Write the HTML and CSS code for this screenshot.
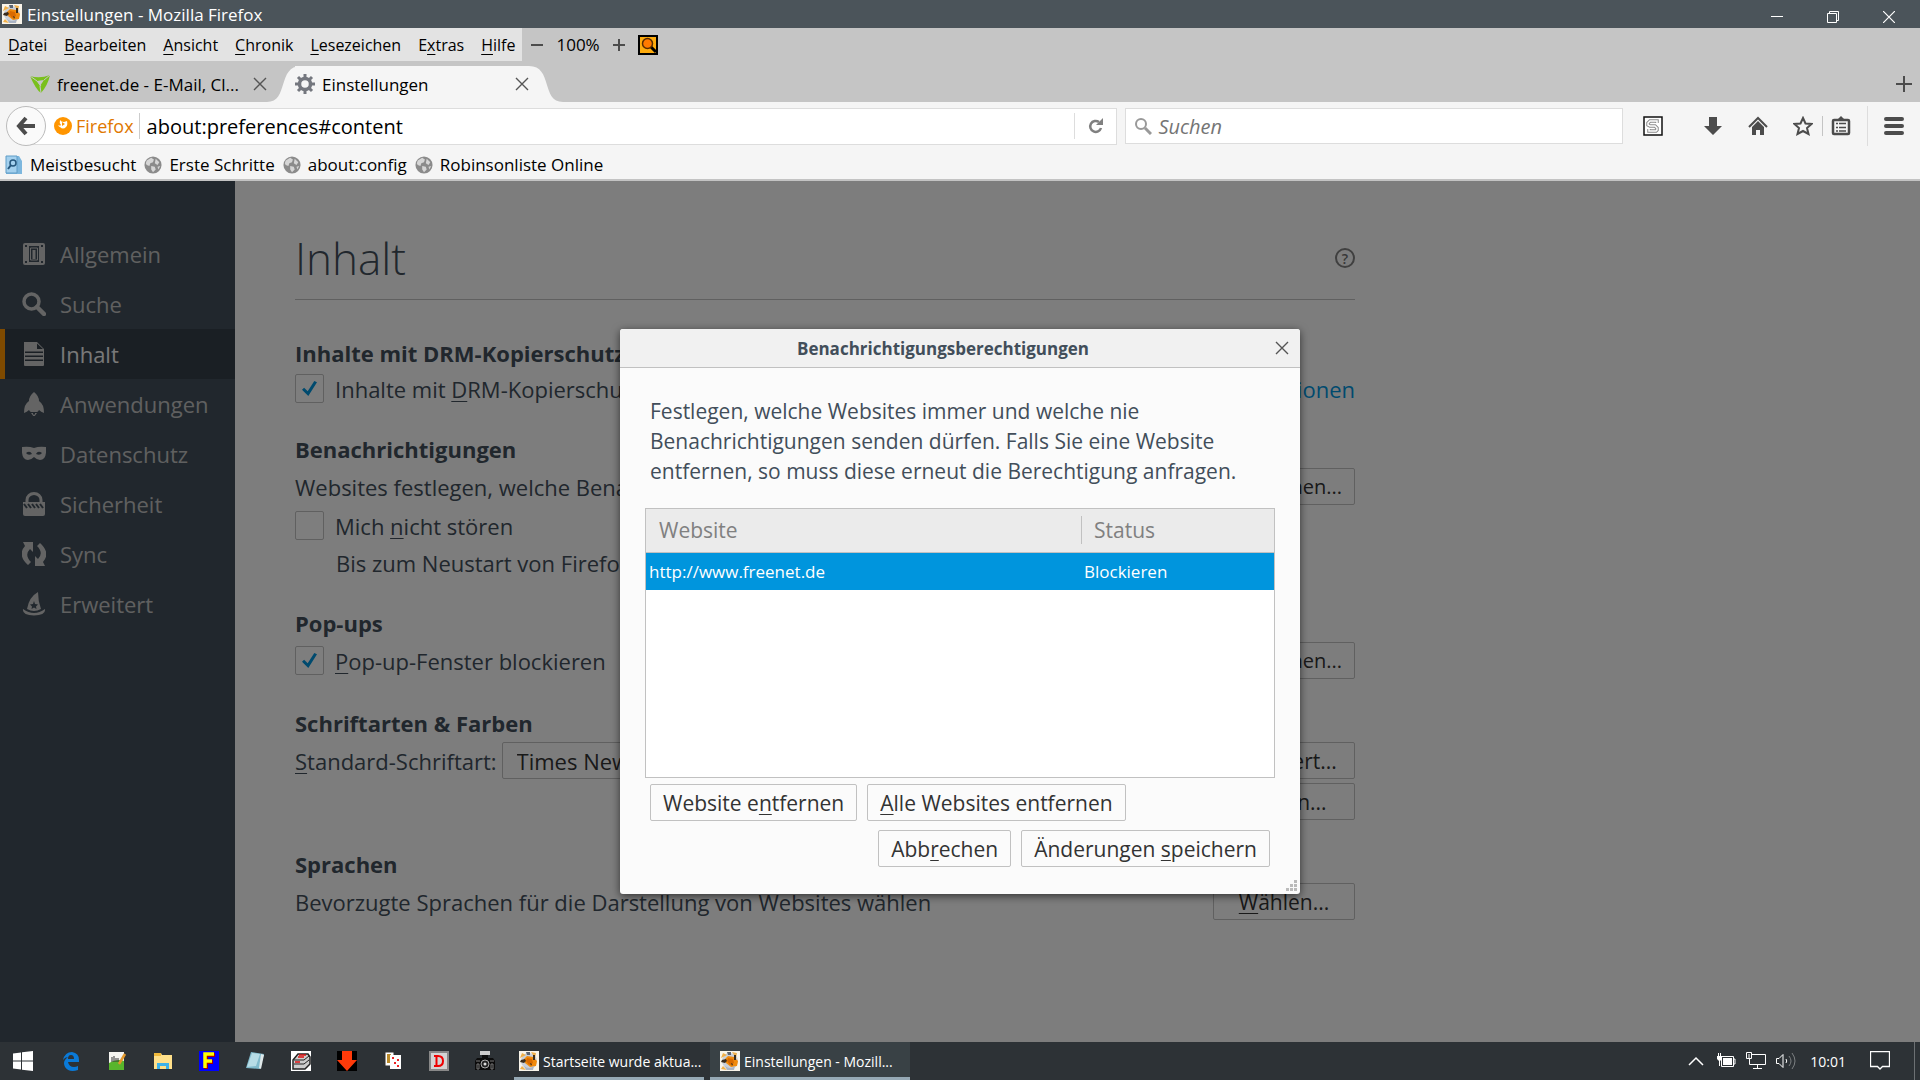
FILE: index.html
```html
<!DOCTYPE html>
<html lang="de">
  <head>
    <meta charset="UTF-8" />
    <meta name="viewport" content="width=device-width, initial-scale=1.0" />
    <title>Einstellungen</title>
    <link rel="stylesheet" href="styles.css">
  </head>
  <body>
    <!-- reused icons -->
    <svg class="defs" width="0" height="0">
      <symbol id="fox" viewBox="0 0 20 20">
        <rect width="20" height="20" fill="#f8f4ea" />
        <circle cx="10" cy="10" r="8" fill="#c9d0da" />
        <path d="M1 7l2-5 4 2zM12 1l5 1-1 5zM3 15l4 4-6-1z" fill="#f0b04a" />
        <path d="M5 8l3-3 6 1 4 4-1 5-6 1-5-4z" fill="#f08a0c" />
        <path d="M8 7l5 1 1 4-4 2-3-4z" fill="#d96a00" />
        <path d="M2 9l4-1 1 2-2 2-4-1zM14 4h2v5h-2zM11 12l2 1-1 2z" fill="#3a2c1c" />
        <path d="M7 1h4v3H8z" fill="#5c6470" />
        <path d="M5 15q5 4 10 0l-1 4H7z" fill="#aab4c4" />
      </symbol>
      <symbol id="close" viewBox="0 0 14 14">
        <path d="M1 1l12 12M13 1L1 13" fill="none" stroke="currentColor" stroke-width="1.4" />
      </symbol>
      <symbol id="globe" viewBox="0 0 20 20">
        <circle cx="10" cy="10" r="9.500" fill="#8b8b8b" />
        <path d="M3 5l5-3 3 2-1 3-3 1-1 3-3-1-1-2zM13 3l4 4-2 3-3-2zM8 11l4 1 1 3-3 3-2-3zM15 12l3-1-2 4z" fill="#d6d6d6" />
      </symbol>
    </svg>

    <header class="titlebar">
      <svg class="app-icon"><use href="#fox" /></svg>
      <span class="titlebar-text">Einstellungen - Mozilla Firefox</span>
      <button class="win-btn" aria-label="Minimieren">
        <svg width="12" height="12"><path d="M0 5.500h12" stroke="#fff" /></svg>
      </button>
      <button class="win-btn" aria-label="Verkleinern">
        <svg width="12" height="12" fill="none" stroke="#fff"><path d="M.5 2.500h9v9h-9zM2.500 2.500v-2h9v9h-2" /></svg>
      </button>
      <button class="win-btn" aria-label="Schließen">
        <svg width="12" height="12"><path d="M0 0l12 12M12 0L0 12" stroke="#fff" stroke-width="1.2" /></svg>
      </button>
    </header>

    <div class="menu-row">
      <nav class="menubar">
        <button><u>D</u>atei</button>
        <button><u>B</u>earbeiten</button>
        <button><u>A</u>nsicht</button>
        <button><u>C</u>hronik</button>
        <button><u>L</u>esezeichen</button>
        <button>E<u>x</u>tras</button>
        <button><u>H</u>ilfe</button>
      </nav>
      <div class="zoom">
        <button aria-label="Kleiner"><svg width="14" height="14"><path d="M1 7h12" stroke="#4c4c4c" stroke-width="2" /></svg></button>
        <span class="zoom-value">100%</span>
        <button aria-label="Größer"><svg width="14" height="14"><path d="M1 7h12M7 1v12" stroke="#4c4c4c" stroke-width="2" /></svg></button>
        <button aria-label="Seite durchsuchen">
          <svg width="20" height="20"><path d="M1 1h18v18H1z" fill="#fdab0e" stroke="#000" stroke-width="2" /><path d="M13 12l5 5" stroke="#000" stroke-width="3" /><circle cx="9.500" cy="8.500" r="5" fill="#ff7a00" stroke="#5a2c00" stroke-width="1.500" /></svg>
        </button>
      </div>
    </div>

    <div class="tabs">
      <div class="tab">
        <svg width="20" height="18" viewBox="0 0 20 18"><path d="M0 1q10 3 20-1-2 10-9 18Q6 15 0 1z" fill="#7ac01c" /><path d="M7 6l7-1-4 6z" fill="#c6c6c6" /><path d="M0 1l7 5 4 5M20 0l-6 5M11 18l-1-7" stroke="#c6c6c6" fill="none" /></svg>
        <span class="tab-text">freenet.de - E-Mail, Cl...</span>
        <button class="tab-close" aria-label="Tab schließen"><svg width="14" height="14"><use href="#close" /></svg></button>
      </div>
      <div class="tab active">
        <svg class="curve" width="34" height="36"><path d="M0 36C22 36 10 0 34 0V36z" fill="#f5f5f5" /></svg>
        <div class="tab-body">
          <svg width="20" height="20" viewBox="0 0 20 20"><circle cx="10" cy="10" r="5.500" fill="none" stroke="#74777e" stroke-width="3.500" /><path d="M10 0v4M10 16v4M0 10h4M16 10h4M3 3l3 3M14 14l3 3M17 3l-3 3M6 14l-3 3" stroke="#74777e" stroke-width="3" /></svg>
          <span class="tab-text">Einstellungen</span>
          <button class="tab-close" aria-label="Tab schließen"><svg width="14" height="14"><use href="#close" /></svg></button>
        </div>
        <svg class="curve" width="34" height="36"><path d="M34 36C12 36 24 0 0 0V36z" fill="#f5f5f5" /></svg>
      </div>
      <button class="new-tab" aria-label="Neuer Tab"><svg width="16" height="16"><path d="M0 8h16M8 0v16" stroke="#4c4c4c" stroke-width="2" /></svg></button>
    </div>

    <div class="navbar">
      <button class="back" aria-label="Zurück">
        <svg width="20" height="20"><path d="M10 2L3 10l7 8M3 10h16" fill="none" stroke="#4c4c4c" stroke-width="4" /></svg>
      </button>
      <div class="urlbar">
        <svg width="18" height="18" viewBox="0 0 18 18"><circle cx="9" cy="9" r="9" fill="#ff9500" /><path d="M6 3q1 2 4 2l3-1q1 4-1 6-3 3-6 0-1 0-2-2 2 1 3 0-2-2-1-5z" fill="#fff" /><path d="M8 5l3 2-3 2z" fill="#ff9500" /></svg>
        <span class="identity">Firefox</span>
        <input class="url" type="text" aria-label="Adresse" value="about:preferences#content" />
        <button class="reload" aria-label="Neu laden">
          <svg width="16" height="16"><path d="M13 10a5.500 5.500 0 1 1-2-6" fill="none" stroke="#808080" stroke-width="2.500" /><path d="M15 0v7H8z" fill="#808080" /></svg>
        </button>
      </div>
      <div class="searchbar">
        <svg width="18" height="18"><circle cx="7" cy="7" r="5" fill="none" stroke="#999" stroke-width="2" /><path d="M11 11l6 6" stroke="#999" stroke-width="3" /></svg>
        <input type="text" aria-label="Suchen" placeholder="Suchen" />
      </div>
      <div class="tools">
        <button class="tool-first" aria-label="Stylish"><svg width="20" height="20"><path d="M1 1h18v18H1z" fill="#fff" stroke="#111" stroke-width="1.500" /><path d="M14 7V5H7L5 7v2l2 1h5l2 2v2l-1 1H6v-2" fill="none" stroke="#8c8c8c" stroke-width="3.500" /><path d="M14 7V5H7L5 7v2l2 1h5l2 2v2l-1 1H6v-2" fill="none" stroke="#fff" stroke-width="1.500" /></svg></button>
        <button class="tool-download" aria-label="Downloads"><svg width="20" height="20"><path d="M6 1h8v9h5l-9 9-9-9h5z" fill="#4c4c4c" /></svg></button>
        <button class="tool" aria-label="Startseite"><svg width="20" height="20"><path d="M1 11l9-9 9 9" fill="none" stroke="#4c4c4c" stroke-width="2" /><path d="M4 11l6-6 6 6v8h-4v-5H8v5H4z" fill="#4c4c4c" /></svg></button>
        <button class="tool" aria-label="Lesezeichen"><svg width="20" height="20"><path d="M10 2l2.500 5.500 6 .5-4.500 4 1.500 6-5.500-3-5.500 3L6 12 1.500 8l6-.5z" fill="none" stroke="#4c4c4c" stroke-width="2" /></svg></button>
        <button class="tool-list" aria-label="Lesezeichen anzeigen"><svg width="20" height="20"><path d="M6 4l4-4 4 4z" fill="#4c4c4c" /><rect x="2" y="4" width="16" height="14" rx="1" fill="none" stroke="#4c4c4c" stroke-width="2.500" /><path d="M5 7.500h2M8 7.500h7M5 11.500h2M8 11.500h7M5 15h2M8 15h7" stroke="#4c4c4c" stroke-width="1.500" /></svg></button>
        <button class="tool-menu" aria-label="Menü"><svg width="20" height="20"><path d="M2 3h16M2 10h16M2 17h16" stroke="#4c4c4c" stroke-width="4" stroke-linecap="round" /></svg></button>
      </div>
    </div>

    <nav class="bookmarks">
      <a href="#"><svg width="18" height="20"><path d="M1 1h13l3 5v13H1z" fill="#7db7de" /><path d="M1 1h11v17H1z" fill="#a3d0ee" stroke="#5e9cc6" /><circle cx="8" cy="8" r="3" fill="none" stroke="#26577d" stroke-width="1.500" /><path d="M6 10l-3 4" stroke="#26577d" stroke-width="2" /></svg>Meistbesucht</a>
      <a href="#"><svg width="18" height="18"><use href="#globe" /></svg>Erste Schritte</a>
      <a href="#"><svg width="18" height="18"><use href="#globe" /></svg>about:config</a>
      <a href="#"><svg width="18" height="18"><use href="#globe" /></svg>Robinsonliste Online</a>
    </nav>

    <div class="page">
      <nav class="categories">
        <a href="#"><svg viewBox="0 0 24 24"><path fill-rule="evenodd" d="M3 1h18q2 0 2 2v18q0 2-2 2H3q-2 0-2-2V3q0-2 2-2zM7 4v16h10V4zM3 3v2h2V3zM19 3v2h2V3zM3 19v2h2v-2zM19 19v2h2v-2z" /><path d="M8.500 6h7v12h-7z" fill="#424f5a" stroke="#c8c8c8" /><path d="M10.500 8h3v9h-3z" /></svg>Allgemein</a>
        <a href="#"><svg viewBox="0 0 24 24"><circle cx="9.500" cy="9.500" r="7.500" fill="none" stroke="#c8c8c8" stroke-width="3.500" /><path d="M15 15l7 7" stroke="#c8c8c8" stroke-width="4.500" stroke-linecap="round" /></svg>Suche</a>
        <a class="selected" href="#"><svg viewBox="0 0 24 24"><path fill-rule="evenodd" d="M2 0h13l7 7v16q0 1-1 1H3q-1 0-1-1zM3 9.500V11h18V9.500zM3 13.500V15h18v-1.500zM3 17.500V19h18v-1.500zM15 1.500V7h6z" /></svg>Inhalt</a>
        <a href="#"><svg viewBox="0 0 24 24"><path d="M12 0q5 4 5 9 5 3 5 12-3-1-5-3-1 2-2 2H9q-1 0-2-2-2 2-5 3 0-9 5-12 0-5 5-9zM9 21h2v1l1 1 1-1v-1h2l-3 4z" /></svg>Anwendungen</a>
        <a href="#"><svg viewBox="0 0 24 24"><path fill-rule="evenodd" d="M0 5q7-1 12 1 5-2 12-1 1 13-6 13-3 0-6-3-3 3-6 3Q-1 18 0 5zM4 11q2 3 6 1-2-4-6-1zM20 11q-2 3-6 1 2-4 6-1z" /></svg>Datenschutz</a>
        <a href="#"><svg viewBox="0 0 24 24"><path d="M5 11V8a7 6.500 0 0 1 14 0v3" fill="none" stroke="#c8c8c8" stroke-width="3" /><path d="M1 10h22v12q0 2-2 2H3q-2 0-2-2z" /><path d="M2 12l3 4M6 12l3 4M10 12l3 4M14 12l3 4M18 12l3 4" stroke="#424f5a" stroke-width="2" /></svg>Sicherheit</a>
        <a href="#"><svg viewBox="0 0 24 24"><path d="M11 0v10L8 7q-6 6 1 13l-3 3Q-5 13 3 4L1 0zM13 24V14l3 3q6-6-1-13l3-3q11 10 3 19l2 4z" /></svg>Sync</a>
        <a href="#"><svg viewBox="0 0 24 24"><path fill-rule="evenodd" d="M16 0q0 9 3 17-7 4-14 0Q7 5 16 0zM12 9l-1 3-3 .5 2 2-.5 2.500 2.500-1.500 2.500 1.500-.5-2.500 2-2-3-.5z" /><path d="M1 17q11 8 22 0 1 6-11 6.500Q0 23 1 17z" /></svg>Erweitert</a>
      </nav>

      <main class="content">
        <div class="page-head">
          <h1>Inhalt</h1>
          <button class="help" aria-label="Hilfe">?</button>
        </div>

        <section>
          <h2>Inhalte mit DRM-Kopierschutz</h2>
          <div class="row check-row">
            <label><input type="checkbox" checked />Inhalte mit <u>D</u>RM-Kopierschutz</label>
            <a class="link" href="#">Weitere Informationen</a>
          </div>
        </section>

        <section>
          <h2>Benachrichtigungen</h2>
          <div class="row">
            <span>Websites festlegen, welche Benachrichtigungen</span>
            <button class="btn page-btn exceptions">Ausnahmen...</button>
          </div>
          <div class="row check-row">
            <label><input type="checkbox" />Mich <u>n</u>icht stören</label>
          </div>
          <div class="row check-row indent">Bis zum Neustart von Firefox</div>
        </section>

        <section>
          <h2>Pop-ups</h2>
          <div class="row">
            <label><input type="checkbox" checked /><span><u>P</u>op-up-Fenster blockieren</span></label>
            <button class="btn page-btn exceptions">Ausnahmen...</button>
          </div>
        </section>

        <section>
          <h2>Schriftarten &amp; Farben</h2>
          <div class="row">
            <div class="font-row">
              <label for="font"><u>S</u>tandard-Schriftart:</label>
              <select id="font"><option>Times New Roman</option></select>
            </div>
            <button class="btn page-btn">Erweitert...</button>
          </div>
          <div class="row end">
            <button class="btn page-btn">Farben...</button>
          </div>
        </section>

        <section>
          <h2>Sprachen</h2>
          <div class="row">
            <span>Bevorzugte Sprachen für die Darstellung von Websites wählen</span>
            <button class="btn page-btn"><u>W</u>ählen...</button>
          </div>
        </section>
      </main>

      <div class="overlay">
        <div class="dialog" role="dialog" aria-labelledby="dialog-title">
          <div class="dialog-head">
            <span id="dialog-title">Benachrichtigungsberechtigungen</span>
            <button class="dialog-close" aria-label="Schließen"><svg width="14" height="14"><use href="#close" /></svg></button>
          </div>
          <div class="dialog-body">
            <p>Festlegen, welche Websites immer und welche nie Benachrichtigungen senden dürfen. Falls Sie eine Website entfernen, so muss diese erneut die Berechtigung anfragen.</p>
            <div class="tree">
              <table>
                <thead>
                  <tr><th class="col-site">Website</th><th><span class="split">Status</span></th></tr>
                </thead>
                <tbody>
                  <tr><td>http://www.freenet.de</td><td>Blockieren</td></tr>
                </tbody>
              </table>
            </div>
            <div class="buttons">
              <button class="btn">Website e<u>n</u>tfernen</button>
              <button class="btn"><u>A</u>lle Websites entfernen</button>
            </div>
            <div class="buttons end">
              <button class="btn">Abb<u>r</u>echen</button>
              <button class="btn">Änderungen <u>s</u>peichern</button>
            </div>
          </div>
          <svg class="resizer" width="12" height="12" fill="#bbb"><path d="M8 0h3v3H8zM4 4h3v3H4zM8 4h3v3H8zM0 8h3v3H0zM4 8h3v3H4zM8 8h3v3H8z" /></svg>
        </div>
      </div>
    </div>

    <footer class="taskbar">
      <button class="start" aria-label="Start"><svg viewBox="0 0 20 20"><path d="M0 2.500L8 1.500V9.500H0zM9 1.300L20 0V9.500H9zM0 10.500h8v8l-8-1zM9 10.500h11V20L9 18.700z" fill="#fff" /></svg></button>
      <button class="launch" aria-label="Edge"><svg viewBox="0 0 20 20"><path d="M2 9Q4 1 11 1q7 1 7 8v2H7q1 5 6 5 2 0 4-1v4q-9 3-13-3-3-6 3-10-3 0-5 3zM7 8h6q0-4-3-4T7 8z" fill="#0a7ad8" /></svg></button>
      <button class="launch" aria-label="Editor"><svg viewBox="0 0 20 20"><path d="M2 1h15v18H2z" fill="#f4f4f0" /><path d="M2 12q8-5 15-2v9H2z" fill="#58b52c" /><path d="M5 11V6M7 11V5M9 11V7M11 11V7" stroke="#333" /><path d="M18 3l-6 10" stroke="#e2972b" stroke-width="2.500" /></svg></button>
      <button class="launch" aria-label="Explorer"><svg viewBox="0 0 20 20"><path d="M1 2h7l1 2h10v14H1z" fill="#ffe08a" /><path d="M1 2h7v3H1z" fill="#f0b93b" /><path d="M4 18v-6h12v6h-3v-3H7v3z" fill="#3db2ea" /></svg></button>
      <button class="launch" aria-label="F"><svg viewBox="0 0 20 20"><path d="M0 0h20v20H0z" fill="#00f" /><path d="M7 18V4h9M7 11h7" fill="none" stroke="#a00" stroke-width="4" /><path d="M6 17V3h9M6 10h7" fill="none" stroke="#ff0" stroke-width="3.500" /></svg></button>
      <button class="launch" aria-label="Notizen"><svg viewBox="0 0 20 20"><path d="M6 1l13 2-4 15-14-1z" fill="#7fb9cb" /><path d="M7 2l8 1-4 12-9 1z" fill="#b7dce6" /><path d="M16 3l3 1-3 14-2-1z" fill="#dfe8ea" /></svg></button>
      <button class="launch" aria-label="Drucker"><svg viewBox="0 0 20 20"><path d="M0 0h20v20H0z" fill="#fff" /><path d="M2 9l5-6h10l2 3v7l-5 5H2z" fill="#ccc" stroke="#222" stroke-width="1.500" /><path d="M3 9h10l5-4M3 13h10l5-4" stroke="#222" fill="none" /><path d="M8 4h7M7 6h6M4 11h5" stroke="#d11" stroke-width="1.500" /></svg></button>
      <button class="launch" aria-label="Download"><svg viewBox="0 0 20 20"><path d="M0 0h20v20H0z" /><path d="M5 0h10v9h5L10 20 0 9h5z" fill="#ff3a0a" /></svg></button>
      <button class="launch" aria-label="Karten"><svg viewBox="0 0 20 20"><path d="M2 1h9v14H2z" fill="#fff" stroke="#333" /><path d="M4 3h4v9H4z" fill="#b98a2a" /><path d="M7 4h11v14H7z" fill="#fff" /><path d="M9 6h2v2H9zM14 8h2v2h-2zM11 11h2v2h-2zM14 14h2v2h-2z" fill="#e22" /></svg></button>
      <button class="launch" aria-label="D"><svg viewBox="0 0 20 20"><path d="M1 1h18v18H1z" fill="#d4d4d4" stroke="#888" stroke-width="2" /><path d="M5 5h4q5 0 5 5t-5 5H5M7.500 5v10" fill="none" stroke="#e00" stroke-width="2" /></svg></button>
      <button class="launch" aria-label="Kamera"><svg viewBox="0 0 20 20"><path d="M5 0h10v4H5z" fill="#ccc" /><path d="M7 4h6v3h5l2 3v9H0v-9l2-3h5z" fill="#0c0c0c" /><circle cx="10" cy="13" r="4" fill="#222" stroke="#aaa" /><path d="M1 10h4M15 10h4M2 13h2v5H2zM16 13h2v5h-2z" stroke="#777" fill="none" /><circle cx="10" cy="13" r="1.500" fill="#ddd" /></svg></button>
      <button class="task"><svg class="app-icon"><use href="#fox" /></svg><span>Startseite wurde aktua...</span></button>
      <button class="task current"><svg class="app-icon"><use href="#fox" /></svg><span>Einstellungen - Mozill...</span></button>
      <div class="tray">
        <svg width="16" height="10"><path d="M1 9l7-7 7 7" fill="none" stroke="#fff" stroke-width="1.500" /></svg>
        <svg class="tray-first" width="20" height="16"><path d="M5.500 3.500h12v10h-12zM17 6h2v5h-2" fill="none" stroke="#fff" /><path d="M7 5h9v7H7zM1 3h5v3L4 8v5H3V8L1 6zM2 0h1v3H2zM4 0h1v3H4z" fill="#fff" /></svg>
        <svg width="20" height="18"><path d="M6 2.500h13.500v10H3.500V7M11.500 13v4M7 16.500h9" fill="none" stroke="#fff" /><path d="M.5.5h5v6h-5zM3 2v5" fill="none" stroke="#fff" /></svg>
        <svg width="20" height="18" fill="none" stroke="#fff"><path d="M.5 6.500H3l4-4v13l-4-4H.5z" /><path d="M10 7q1.500 2 0 4" /><path d="M13 4q4 5 0 10M16 1q6 8 0 16" stroke="#7c8082" /></svg>
        <time>10:01</time>
        <svg class="tray-note" width="20" height="20"><path d="M.5.5h19v15h-7L10 18l-2.500-2.500h-7z" fill="none" stroke="#fff" stroke-width="1.300" /></svg>
      </div>
    </footer>
  </body>
</html>
```
FILE: styles.css
```css
* {
  box-sizing: border-box;
}
body {
  margin: 0;
  min-height: 100vh;
  display: flex;
  flex-direction: column;
  font-family: "Open Sans", "Noto Sans", sans-serif;
  font-size: 17px;
  color: #000;
  background: #fbfbfb;
  white-space: nowrap;
}
button,
input,
select {
  font: inherit;
  color: inherit;
  border: none;
  background: none;
  padding: 0;
  margin: 0;
}
button {
  display: flex;
  align-items: center;
  justify-content: center;
}
svg {
  flex: none;
}
a {
  color: inherit;
  text-decoration: none;
}
u {
  text-decoration-thickness: 1px;
  text-underline-offset: 3px;
}
.defs {
  position: absolute;
}
.app-icon {
  width: 20px;
  height: 20px;
}

/* title bar */
.titlebar {
  display: flex;
  align-items: center;
  height: 28px;
  padding: 0 3px 0 2px;
  background: #4b545a;
  color: #fff;
}
.titlebar-text {
  flex: 1;
  padding-left: 5px;
}
.win-btn {
  width: 56px;
  height: 28px;
  padding-top: 5px;
}

/* menu bar */
.menu-row {
  display: flex;
  height: 33px;
  background: #c5c5c5;
}
.menubar {
  display: flex;
  gap: 17px;
  padding: 0 7px 0 8px;
  background: #e3e3e3;
  font-size: 16px;
}
.zoom {
  display: flex;
  align-items: center;
  gap: 12px;
  padding-left: 8px;
}

/* tabs */
.tabs {
  display: flex;
  align-items: flex-end;
  height: 41px;
  background: #c5c5c5;
}
.tab {
  display: flex;
  align-items: center;
  height: 36px;
  width: 267px;
  padding-left: 30px;
}
.tab.active {
  width: 296px;
  padding: 0;
}
.tab-body {
  flex: 1;
  display: flex;
  align-items: center;
  height: 36px;
  margin-left: -6px;
  background: #f5f5f5;
}
.tab-text {
  flex: 1;
  padding-left: 7px;
}
.tab-close {
  color: #555;
}
.new-tab {
  margin: 0 8px 10px auto;
}

/* navigation */
.navbar {
  display: flex;
  align-items: center;
  height: 48px;
  padding-left: 6px;
  background: #f5f5f5;
}
.back {
  width: 40px;
  height: 40px;
  border: 1px solid #bbb;
  border-radius: 50%;
  background: #fafafa;
  z-index: 1;
}
.urlbar {
  flex: 1;
  display: flex;
  align-items: center;
  height: 37px;
  margin-left: -20px;
  padding-left: 27px;
  border: 1px solid #ddd;
  background: #fff;
}
.identity {
  padding: 0 5px 0 4px;
  line-height: 26px;
  border-right: 1px solid #ccc;
  color: #e07800;
  font-size: 18px;
}
.url {
  flex: 1;
  min-width: 0;
  padding-left: 7px;
  font-size: 20px;
}
.reload {
  width: 42px;
  height: 26px;
  border-left: 1px solid #ddd;
}
.searchbar {
  width: 26%;
  display: flex;
  align-items: center;
  gap: 6px;
  height: 36px;
  margin-left: 8px;
  padding-left: 8px;
  border: 1px solid #ddd;
  background: #fff;
}
.searchbar input {
  flex: 1;
  min-width: 0;
  font-size: 20px;
}
.searchbar input::placeholder {
  color: #757575;
  font-style: italic;
}
.tools {
  display: flex;
  align-items: center;
  padding-right: 16px;
}
.tool-first {
  margin-left: 20px;
}
.tool-download {
  margin-left: 40px;
}
.tool {
  margin-left: 25px;
}
.tool-list {
  margin-left: 9px;
  padding: 0 16px 0 8px;
  border-left: 1px solid #c4c4c4;
}
.tool-menu {
  height: 40px;
  padding-left: 16px;
  border-left: 1px solid #ddd;
}

/* bookmarks */
.bookmarks {
  display: flex;
  gap: 8px;
  height: 31px;
  padding: 0 5px;
  background: #f5f5f5;
  border-bottom: 2px solid #c3c3c3;
}
.bookmarks a {
  display: flex;
  align-items: center;
  gap: 7px;
}

/* preferences page */
.page {
  flex: 1;
  display: flex;
  position: relative;
  overflow: hidden;
}
.categories {
  width: 235px;
  padding-top: 48px;
  background: #424f5a;
  color: #c1c1c1;
  font-size: 22px;
}
.categories a {
  display: flex;
  align-items: center;
  gap: 14px;
  height: 50px;
  padding-left: 22px;
}
.categories svg {
  width: 24px;
  height: 24px;
  fill: #c8c8c8;
}
.categories .selected {
  padding-left: 17px;
  border-left: 5px solid #ff9500;
  background: #343f48;
  color: #f2f2f2;
}
.content {
  flex: 1;
  max-width: 1120px;
  padding: 47px 0 0 60px;
  color: #424e5a;
  font-size: 22px;
}
.page-head {
  display: flex;
  align-items: center;
  justify-content: space-between;
  padding-bottom: 11px;
  border-bottom: 1px solid #c1c1c1;
  margin-bottom: 38px;
}
h1 {
  margin: 0;
  font-size: 44px;
  font-weight: 300;
  line-height: 60px;
}
.help {
  width: 20px;
  height: 20px;
  border: 2px solid #808080;
  border-radius: 50%;
  color: #707070;
  font-size: 14px;
  font-weight: 600;
}
section {
  display: flex;
  flex-direction: column;
  gap: 4px;
  margin-bottom: 29px;
}
h2 {
  margin: 0;
  font-size: 22px;
  font-weight: 700;
  line-height: 30px;
}
.row {
  display: flex;
  align-items: center;
  justify-content: space-between;
  height: 37px;
}
.check-row {
  height: 33px;
}
.row.end,
.buttons.end {
  justify-content: flex-end;
}
.indent {
  padding-left: 41px;
}
.row label {
  display: flex;
  align-items: center;
  white-space: pre;
}
input[type="checkbox"] {
  appearance: none;
  display: grid;
  place-items: center;
  width: 29px;
  height: 29px;
  margin-right: 11px;
  border: 1px solid #c1c1c1;
  border-radius: 2px;
  background: #fcfcfc;
}
input[type="checkbox"]:checked::before {
  content: "";
  width: 15px;
  height: 15px;
  background: #0095dd;
  clip-path: polygon(0 58%, 14% 45%, 38% 68%, 82% 0, 100% 8%, 42% 100%);
}
.link {
  color: #0095dd;
}
.btn {
  display: block;
  height: 37px;
  padding: 0 12px;
  border: 1px solid #c1c1c1;
  border-radius: 2px;
  background: #fbfbfb;
  color: #333;
  font-size: 21px;
}
.page-btn {
  width: 142px;
  padding: 0;
}
.exceptions {
  padding-right: 12px;
  font-size: 20px;
  text-align: right;
}
.font-row {
  display: flex;
  align-items: center;
  gap: 5px;
}
.font-row select {
  width: 330px;
  height: 37px;
  padding-left: 10px;
  border: 1px solid #c1c1c1;
  border-radius: 2px;
  color: #333;
}

/* dialog */
.overlay {
  position: absolute;
  inset: 0;
  display: flex;
  align-items: center;
  justify-content: center;
  background: rgba(0, 0, 0, 0.5);
}
.dialog {
  position: relative;
  width: 680px;
  border-radius: 3px;
  background: #fbfbfb;
  box-shadow: 0 2px 8px rgba(0, 0, 0, 0.6);
  color: #424e5a;
  font-size: 21px;
}
.dialog-head {
  display: flex;
  align-items: center;
  height: 39px;
  padding: 0 11px;
  border-bottom: 1px solid #c1c1c1;
  border-radius: 3px 3px 0 0;
  background: #f1f1f1;
  font-size: 17px;
  font-weight: 700;
}
#dialog-title {
  flex: 1;
  padding-right: 20px;
  text-align: center;
}
.dialog-close {
  color: #555;
}
.dialog-body {
  padding: 28px 25px 24px;
}
.dialog p {
  margin: 0 20px 22px 5px;
  line-height: 30px;
  white-space: normal;
}
.tree {
  height: 270px;
  border: 1px solid #c1c1c1;
  background: #fff;
}
table {
  width: 100%;
  border-collapse: collapse;
}
th {
  height: 43px;
  padding: 0 0 0 13px;
  border-bottom: 1px solid #c1c1c1;
  background: #ebebeb;
  color: #808080;
  font-weight: 400;
  text-align: left;
}
th:last-child {
  padding: 0;
}
.col-site {
  width: 435px;
}
.split {
  display: block;
  padding-left: 12px;
  border-left: 1px solid #c1c1c1;
}
td {
  height: 38px;
  padding: 0 3px;
  background: #0095dd;
  color: #fff;
  font-size: 17px;
}
.buttons {
  display: flex;
  gap: 10px;
  padding: 6px 5px 3px;
}
.resizer {
  position: absolute;
  right: 2px;
  bottom: 2px;
}

/* taskbar */
.taskbar {
  display: flex;
  height: 38px;
  background: #2d3236;
  color: #fff;
  font-size: 14px;
}
.start,
.launch {
  width: 46px;
}
.start {
  margin-right: 2px;
}
.start svg,
.launch svg {
  width: 20px;
  height: 20px;
}
.task {
  width: 190px;
  justify-content: flex-start;
  gap: 4px;
  margin-left: 6px;
  padding: 3px 0 0 5px;
  border-bottom: 3px solid #96a9b5;
}
.task.current {
  width: 200px;
  padding-left: 10px;
  background: #394145;
}
.tray {
  display: flex;
  align-items: center;
  gap: 10px;
  margin-left: auto;
  margin-right: 5px;
  padding-right: 24px;
  border-right: 1px solid #6c7073;
}
.tray time {
  padding-left: 4px;
}
.tray-first {
  margin-left: 2px;
}
.tray-note {
  margin-left: 14px;
}
```
